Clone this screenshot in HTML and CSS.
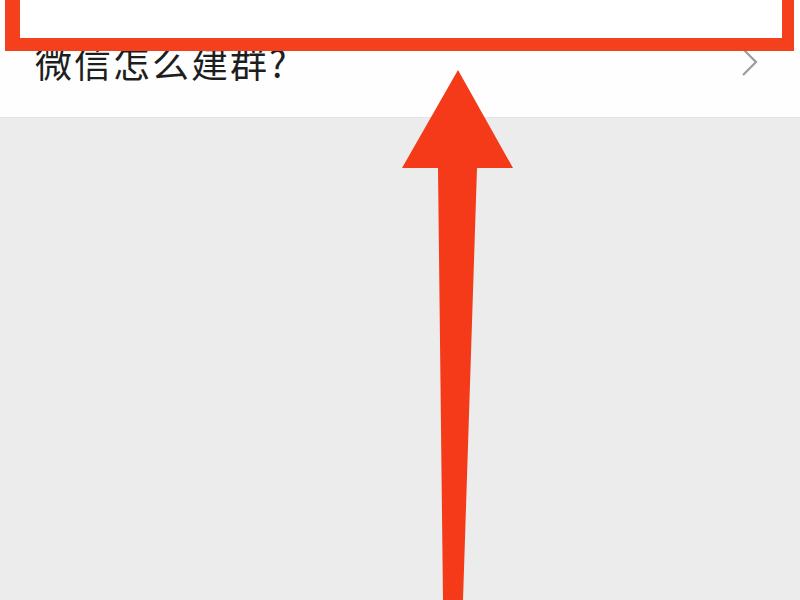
FILE: index.html
```html
<!DOCTYPE html>
<html>
<head>
<meta charset="utf-8">
<link rel="stylesheet" href="styles.css">
</head>
<body>
<div class="page">
  <div class="top">
    <div class="frame"></div>
    <div class="row">
      <span class="label">微信怎么建群?</span>
      <svg class="chev" width="18" height="28" viewBox="0 0 18 28"><path d="M2 1 L15 14 L2 27" fill="none" stroke="#9b9b9b" stroke-width="2.2"/></svg>
    </div>
  </div>
  <div class="rest"></div>
  <svg class="arrow" width="800" height="600" viewBox="0 0 800 600">
    <polygon points="458,70 513,168 477,168 463,600 443,600 438,168 402,168" fill="#f43a18"/>
  </svg>
</div>
</body>
</html>
```
FILE: styles.css
```css
html, body { margin: 0; padding: 0; }
body { width: 800px; height: 600px; overflow: hidden; background: #ececec; font-family: "Noto Sans CJK SC", "Noto Sans", sans-serif; }
.page { position: relative; width: 800px; height: 600px; }
.top { position: relative; height: 117px; background: #fefefe; border-bottom: 1px solid #e4e4e4; }
.frame { position: absolute; left: 5px; top: -20px; width: 762px; height: 43px; border: 15px solid #f4401c; border-right-width: 12px; border-bottom-width: 13px; background: #fff; }
.row { display: flex; align-items: center; justify-content: space-between; height: 50px; padding: 37px 41px 0 35px; }
.label { font-size: 37px; color: #1e1e1e; line-height: 50px; letter-spacing: 2px; }
.chev { display: block; margin-top: 0; }
.rest { height: 482px; background: #ececec; }
.arrow { position: absolute; left: 0; top: 0; }
```
